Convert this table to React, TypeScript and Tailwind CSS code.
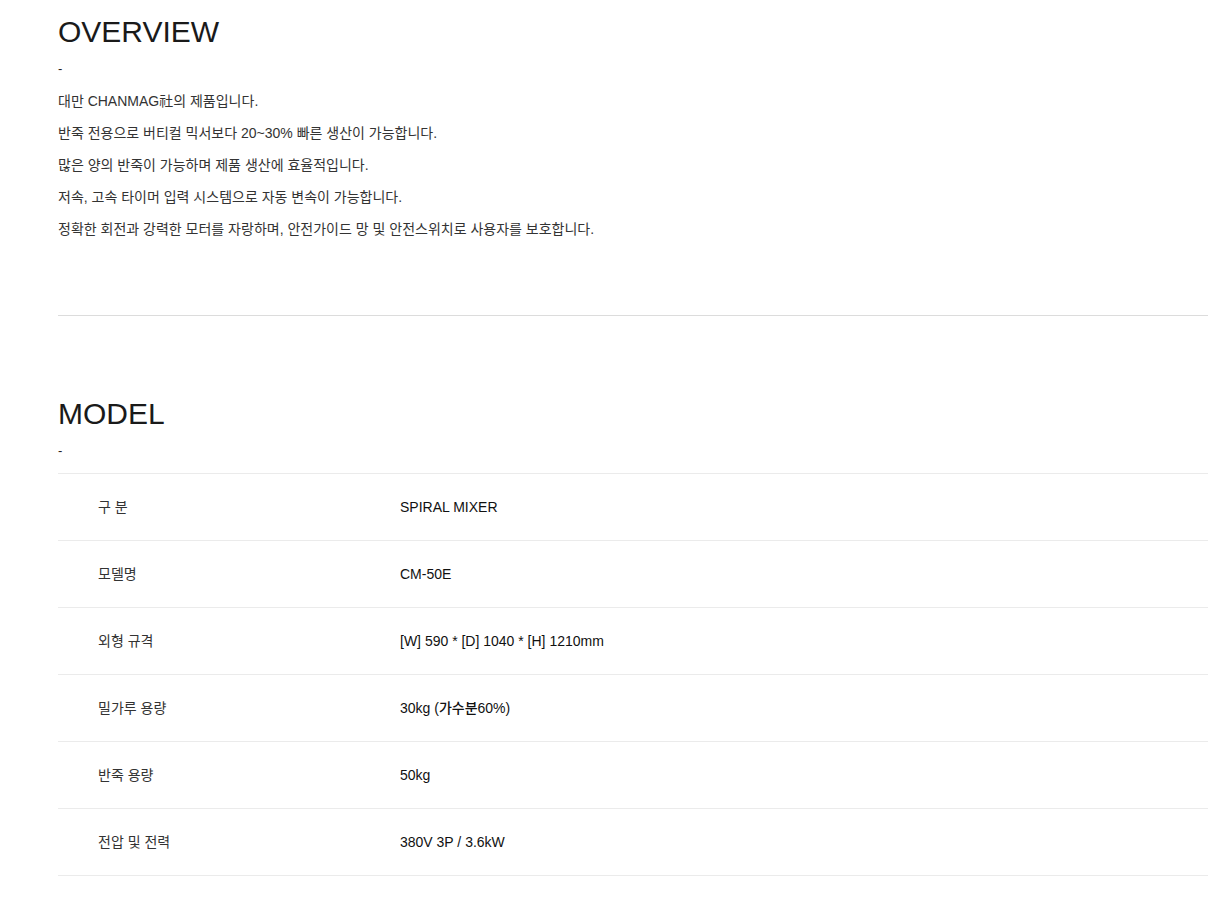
const overview = [
  "대만 CHANMAG社의 제품입니다.",
  "반죽 전용으로 버티컬 믹서보다 20~30% 빠른 생산이 가능합니다.",
  "많은 양의 반죽이 가능하며 제품 생산에 효율적입니다.",
  "저속, 고속 타이머 입력 시스템으로 자동 변속이 가능합니다.",
  "정확한 회전과 강력한 모터를 자랑하며, 안전가이드 망 및 안전스위치로 사용자를 보호합니다.",
];

const specs = [
  { label: "구 분", value: "SPIRAL MIXER" },
  { label: "모델명", value: "CM-50E" },
  { label: "외형 규격", value: "[W] 590 * [D] 1040 * [H] 1210mm" },
  { label: "밀가루 용량", value: "30kg (가수분60%)" },
  { label: "반죽 용량", value: "50kg" },
  { label: "전압 및 전력", value: "380V 3P / 3.6kW" },
];

export default function App() {
  return (
    <div
      className="min-h-[910px] bg-white pl-[58px] pr-[22px] text-[#222]"
      style={{ fontFamily: '"Liberation Sans", "Noto Sans CJK KR", Arial, sans-serif' }}
    >
      {/* OVERVIEW */}
      <section className="pt-[13px]">
        <h2 className="text-[30px] leading-[38px] font-normal text-[#1a1a1a]">OVERVIEW</h2>
        <p className="mt-[8px] text-[13px] leading-[20px]">-</p>
        <div className="mt-[6px] text-[14px] leading-[32px] text-[#333]">
          {overview.map((line) => (
            <p key={line}>{line}</p>
          ))}
        </div>
        <div className="mt-[70px] border-t border-[#dcdcdc]" />
      </section>

      {/* MODEL */}
      <section className="mt-[79px]">
        <h2 className="text-[30px] leading-[38px] font-normal text-[#1a1a1a]">MODEL</h2>
        <p className="mt-[8px] text-[13px] leading-[20px]">-</p>
        <div className="mt-[12px] border-t border-[#ebebeb]">
          {specs.map((row) => (
            <div key={row.label} className="flex h-[67px] items-center border-b border-[#ebebeb] text-[14px]">
              <div className="w-[342px] pl-[40px] text-[#333]">{row.label}</div>
              <div className="font-medium text-[#111]">{row.value}</div>
            </div>
          ))}
        </div>
      </section>
    </div>
  );
}
